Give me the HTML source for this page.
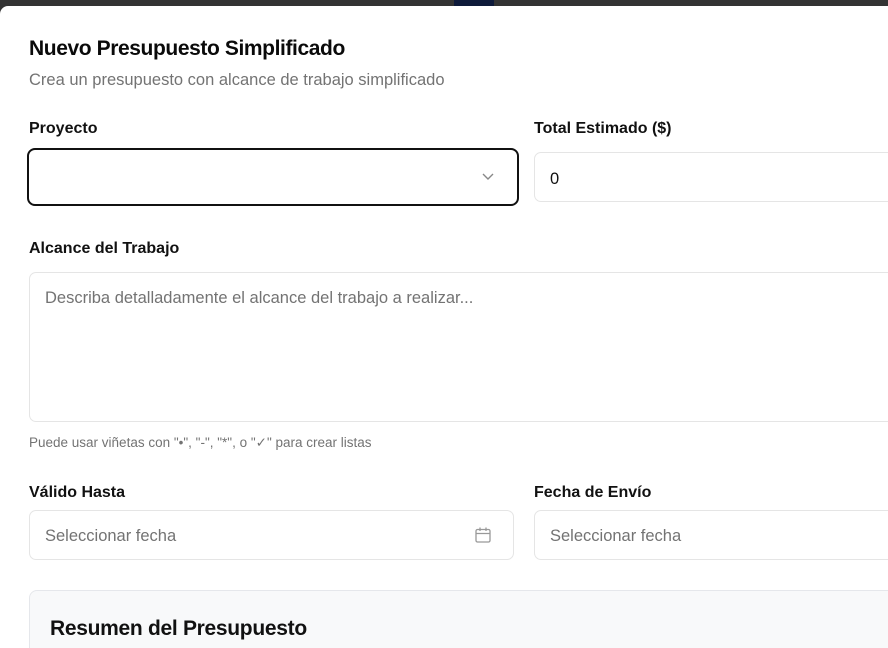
<!DOCTYPE html>
<html><head><meta charset="utf-8"><style>
*{box-sizing:border-box;margin:0;padding:0}
html,body{width:888px;height:648px;overflow:hidden;background:#333}
body{font-family:"Liberation Sans",sans-serif;color:#111;position:relative}
.nav{position:absolute;left:454px;top:0;width:40px;height:6px;background:#0e1a3a}
.modal{position:absolute;left:0;top:6px;width:888px;height:642px;background:#fff;border-radius:8px 0 0 0;overflow:hidden}
.a{position:absolute}
h1{position:absolute;left:29px;top:31px;font-size:21px;font-weight:600;letter-spacing:-0.4px;color:#0a0a0a}
.sub{left:29px;top:65px;font-size:16.5px;color:#737373}
.lbl{font-size:16px;font-weight:600;color:#111}
.box{border:1px solid #e5e5e5;border-radius:7px;background:#fff}
.ph{font-size:16.5px;color:#737373}
</style></head><body>
<div class="nav"></div>
<div class="modal">
<h1>Nuevo Presupuesto Simplificado</h1>
<div class="a sub">Crea un presupuesto con alcance de trabajo simplificado</div>

<div class="a lbl" style="left:29px;top:114px">Proyecto</div>
<div class="a lbl" style="left:534px;top:114px">Total Estimado ($)</div>
<div class="a" style="left:27px;top:142px;width:492px;height:58px;border:2px solid #111;border-radius:8px;background:#fff"></div>
<svg class="a" style="left:481px;top:165px" width="14" height="12" viewBox="0 0 14 12"><path d="M2 3l5 5 5-5" fill="none" stroke="#888" stroke-width="1.4"/></svg>
<div class="a box" style="left:534px;top:146px;width:400px;height:50px"></div>
<div class="a" style="left:550px;top:164px;font-size:16.5px;color:#111">0</div>

<div class="a lbl" style="left:29px;top:234px">Alcance del Trabajo</div>
<div class="a box" style="left:29px;top:266px;width:900px;height:150px"></div>
<div class="a ph" style="left:45px;top:283px">Describa detalladamente el alcance del trabajo a realizar...</div>
<div class="a" style="left:29px;top:429px;font-size:13.5px;color:#737373">Puede usar viñetas con "•", "-", "*", o "✓" para crear listas</div>

<div class="a lbl" style="left:29px;top:478px">Válido Hasta</div>
<div class="a lbl" style="left:534px;top:478px">Fecha de Envío</div>
<div class="a box" style="left:29px;top:504px;width:485px;height:50px"></div>
<div class="a ph" style="left:45px;top:521px">Seleccionar fecha</div>
<svg class="a" style="left:474px;top:520px" width="18" height="18" viewBox="0 0 18 18"><rect x="2" y="3.5" width="14" height="12.5" rx="1.5" fill="none" stroke="#999" stroke-width="1.3"/><path d="M2 7.5h14M6 1.5v3.5M12 1.5v3.5" stroke="#999" stroke-width="1.3"/></svg>
<div class="a box" style="left:534px;top:504px;width:400px;height:50px"></div>
<div class="a ph" style="left:550px;top:521px">Seleccionar fecha</div>

<div class="a" style="left:29px;top:584px;width:900px;height:80px;background:#f8f9fa;border:1px solid #e5e7eb;border-radius:8px"></div>
<div class="a" style="left:50px;top:611px;font-size:21px;font-weight:600;letter-spacing:-0.3px;color:#111">Resumen del Presupuesto</div>
</div>
</body></html>
